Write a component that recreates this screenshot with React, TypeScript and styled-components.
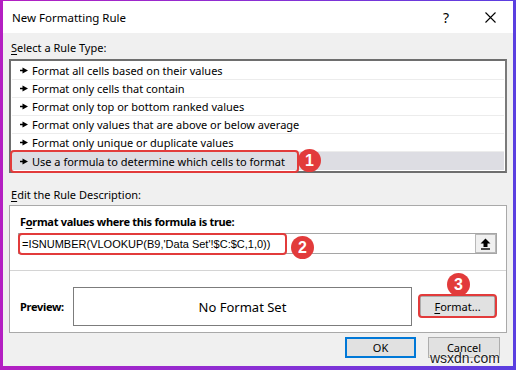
import React from "react";
import styled, { createGlobalStyle } from "styled-components";

const GlobalStyle = createGlobalStyle`
  html, body {
    margin: 0;
    padding: 0;
    width: 516px;
    height: 370px;
    overflow: hidden;
  }
  body {
    font-family: "Noto Sans", "Open Sans", sans-serif;
    font-size: 11px;
    color: #000;
  }
`;

const red = "#e23b3b";

const Frame = styled.div`
  box-sizing: border-box;
  width: 516px;
  height: 370px;
  padding: 1px 3px 4px 3px;
  background: linear-gradient(90deg, #b41fc2 0%, #8a2fd4 50%, #5a3fe0 100%);
`;

const Dialog = styled.div`
  display: flex;
  flex-direction: column;
  height: 100%;
  background: #f0f0f0;
`;

const TitleBar = styled.div`
  display: flex;
  align-items: center;
  height: 32px;
  padding: 0 0 0 9px;
  background: #fff;
  font-size: 11.5px;
`;

const Title = styled.div`
  flex: 1;
`;

const TitleButton = styled.div<{ $w: number }>`
  display: grid;
  place-items: center;
  width: ${(p) => p.$w}px;
  height: 32px;
  font-size: 14px;
`;

const Body = styled.div`
  position: relative;
  display: flex;
  flex-direction: column;
  padding: 0 6px 0 6px;
`;

const SectionLabel = styled.div<{ $m: string }>`
  height: 18px;
  line-height: 18px;
  margin: ${(p) => p.$m};

  u {
    text-decoration-thickness: 1px;
    text-underline-offset: 2px;
  }
`;

const RuleList = styled.div`
  display: flex;
  flex-direction: column;
  padding: 1px;
  border: 2px solid #6e6e6e;
  border-right-color: #7a7a7a;
  background: #fff;
`;

const RuleRow = styled.div<{ $selected?: boolean }>`
  position: relative;
  display: flex;
  align-items: center;
  gap: 4px;
  box-sizing: border-box;
  height: 18px;
  padding-left: 8px;
  border-bottom: 1px solid ${(p) => (p.$selected ? "transparent" : "#ececec")};
  background: ${(p) => (p.$selected ? "#dddde3" : "#fff")};
  white-space: nowrap;

  &:last-child {
    border-bottom: 0;
  }
`;

const Ring = styled.span<{ $inset: string }>`
  position: absolute;
  inset: ${(p) => p.$inset};
  border: 2px solid ${red};
  border-radius: 4px;
  pointer-events: none;
`;

const Badge = styled.span<{ $left: number; $top: number }>`
  position: absolute;
  left: ${(p) => p.$left}px;
  top: ${(p) => p.$top}px;
  display: grid;
  place-items: center;
  width: 23px;
  height: 23px;
  border-radius: 50%;
  background: ${red};
  color: #fff;
  font-family: "Liberation Sans", Arial, sans-serif;
  font-size: 16px;
  font-weight: 700;
  z-index: 2;
`;

const DescBox = styled.div`
  position: relative;
  display: flex;
  flex-direction: column;
  background: #fff;
  border: 1px solid #a9a9a9;
`;

const DescTop = styled.div`
  display: flex;
  flex-direction: column;
  gap: 2px;
  padding: 7px 9px 16px 8px;
  border-bottom: 1px solid #d4d4d4;
`;

const BoldLabel = styled.div<{ $w?: number }>`
  flex-shrink: 0;
  width: ${(p) => (p.$w ? `${p.$w}px` : "auto")};
  height: 18px;
  line-height: 18px;
  font-weight: 700;
  letter-spacing: -0.3px;

  u {
    text-underline-offset: 2px;
  }
`;

const FormulaField = styled.div`
  position: relative;
  display: flex;
  align-items: center;
  box-sizing: border-box;
  height: 21px;
  border: 1px solid #a5a5a5;
  padding-left: 3px;
`;

const FormulaText = styled.span`
  flex: 1;
  font-family: "Liberation Sans", Arial, sans-serif;
  font-size: 11px;
`;

const CollapseButton = styled.div`
  display: grid;
  place-items: center;
  box-sizing: border-box;
  width: 21px;
  height: 19px;
  background: #f0f0f0;
  border: 1px solid #b8b8b8;
`;

const PreviewRow = styled.div`
  display: flex;
  align-items: center;
  padding: 16px 10px 6px 10px;
`;

const PreviewBox = styled.div`
  display: grid;
  place-items: center;
  box-sizing: border-box;
  width: 339px;
  height: 39px;
  border: 1px solid #7c7c7c;
  font-size: 13px;
`;

const Button = styled.div<{ $primary?: boolean; $w: number }>`
  position: relative;
  display: grid;
  place-items: center;
  box-sizing: border-box;
  width: ${(p) => p.$w}px;
  height: 21px;
  background: #e1e1e1;
  border: ${(p) => (p.$primary ? "2px solid #0078d7" : "1px solid #adadad")};
  font-size: 11px;

  u {
    text-underline-offset: 2px;
  }
`;

const FooterRow = styled.div`
  position: relative;
  display: flex;
  justify-content: flex-end;
  gap: 12px;
  padding: 4px 7px 0 0;
`;

const Watermark = styled.span`
  position: absolute;
  right: 7px;
  top: 17px;
  color: #222;
  font-family: "Liberation Sans", Arial, sans-serif;
  font-size: 14px;
  text-shadow: 0 0 2px #fff, 0 0 2px #fff;
`;

const Arrow = () => (
  <svg width="8" height="7" viewBox="0 0 8 7">
    <path d="M0 3.5H3" stroke="#000" strokeWidth="1.5" />
    <path d="M2.5 0.5L8 3.5L2.5 6.5Z" fill="#000" />
  </svg>
);

const rules = [
  "Format all cells based on their values",
  "Format only cells that contain",
  "Format only top or bottom ranked values",
  "Format only values that are above or below average",
  "Format only unique or duplicate values",
  "Use a formula to determine which cells to format",
];

export default function App() {
  return (
    <>
      <GlobalStyle />
      <Frame>
        <Dialog>
          <TitleBar>
            <Title>New Formatting Rule</Title>
            <TitleButton $w={42}>?</TitleButton>
            <TitleButton $w={46}>
              <svg width="11" height="11" viewBox="0 0 11 11">
                <path d="M0.5 0.5L10.5 10.5M10.5 0.5L0.5 10.5" stroke="#000" strokeWidth="1.1" />
              </svg>
            </TitleButton>
          </TitleBar>
          <Body>
            <SectionLabel $m="6px 0 2px 2px">
              <u>S</u>elect a Rule Type:
            </SectionLabel>
            <RuleList>
              {rules.map((r, i) => {
                const selected = i === rules.length - 1;
                return (
                  <RuleRow key={r} $selected={selected}>
                    <Arrow />
                    <span>{r}</span>
                    {selected && (
                      <>
                        <Ring $inset="-2px auto -3px -2px" style={{ width: 285 }} />
                        <Badge $left={286} $top={-3}>1</Badge>
                      </>
                    )}
                  </RuleRow>
                );
              })}
            </RuleList>
            <SectionLabel $m="13px 0 1px 2px">
              <u>E</u>dit the Rule Description:
            </SectionLabel>
            <DescBox>
              <DescTop>
                <BoldLabel style={{ paddingLeft: 2 }}>
                  F<u>o</u>rmat values where this formula is true:
                </BoldLabel>
                <FormulaField>
                  <FormulaText>=ISNUMBER(VLOOKUP(B9,'Data Set'!$C:$C,1,0))</FormulaText>
                  <Ring $inset="-1px auto -2px -1px" style={{ width: 265 }} />
                  <Badge $left={272} $top={2}>2</Badge>
                  <CollapseButton>
                    <svg width="11" height="12" viewBox="0 0 11 12">
                      <path d="M5.5 0.5L10.5 5.5H7.5V9H3.5V5.5H0.5Z" fill="#000" />
                      <path d="M1 11H10" stroke="#000" strokeWidth="1.4" />
                    </svg>
                  </CollapseButton>
                </FormulaField>
              </DescTop>
              <PreviewRow>
                <BoldLabel $w={53}>Preview:</BoldLabel>
                <PreviewBox>No Format Set</PreviewBox>
                <Button $w={75} style={{ marginLeft: 8 }}>
                  <span>
                    <u>F</u>ormat...
                  </span>
                  <Ring $inset="-3px -3px -2px -3px" />
                  <Badge $left={26} $top={-24}>3</Badge>
                </Button>
              </PreviewRow>
            </DescBox>
            <FooterRow>
              <Button $primary $w={71}>OK</Button>
              <Button $w={72}>Cancel</Button>
              <Watermark>wsxdn.com</Watermark>
            </FooterRow>
          </Body>
        </Dialog>
      </Frame>
    </>
  );
}
